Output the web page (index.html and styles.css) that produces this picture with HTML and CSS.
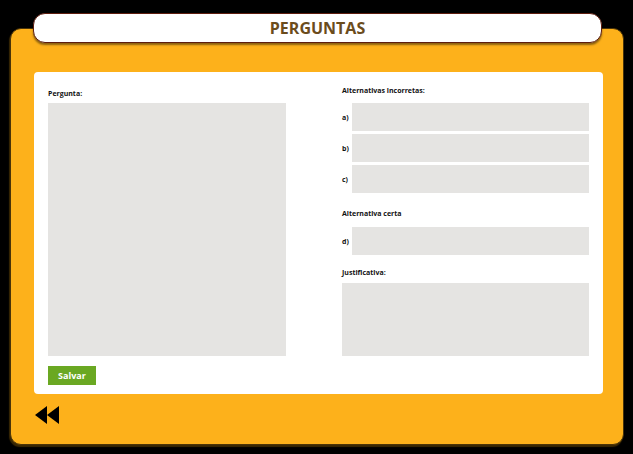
FILE: index.html
```html
<!DOCTYPE html>
<html lang="pt">
<head>
<meta charset="utf-8">
<title>Perguntas</title>
<link rel="stylesheet" href="styles.css">
</head>
<body>
<div class="frame">
  <header class="title-bar"><h1 class="title">PERGUNTAS</h1></header>
  <main class="panel">
    <form class="card">
      <div class="col-left">
        <label class="label label-left">Pergunta:</label>
        <div class="box question"></div>
      </div>
      <div class="col-right">
        <label class="label">Alternativas incorretas:</label>
        <div class="alts">
          <div class="alt"><span class="letter">a)</span><div class="box input"></div></div>
          <div class="alt"><span class="letter">b)</span><div class="box input"></div></div>
          <div class="alt"><span class="letter">c)</span><div class="box input"></div></div>
        </div>
        <label class="label label-certa">Alternativa certa</label>
        <div class="alt"><span class="letter">d)</span><div class="box input"></div></div>
        <label class="label label-just">Justificativa:</label>
        <div class="box justify"></div>
      </div>
      <div class="actions"><button type="button" class="btn">Salvar</button></div>
    </form>
    <div class="nav">
      <svg class="rewind" width="24" height="18" viewBox="0 0 24 18"><polygon points="12,0 0,9 12,18"/><polygon points="24,0 12,9 24,18"/></svg>
    </div>
  </main>
</div>
</body>
</html>
```
FILE: styles.css
```css
* { box-sizing: border-box; }
html, body { margin: 0; padding: 0; background: #000; }
body { font-family: "Open Sans", "Liberation Sans", sans-serif; width: 633px; height: 454px; overflow: hidden; }
.frame { padding: 13px 9px 0 10px; display: flex; flex-direction: column; }
.title-bar {
  position: relative; z-index: 2;
  margin: 0 22px 0 23px; height: 30px;
  background: #fff; border: 1.5px solid #5e1d0e; border-radius: 12px;
  box-shadow: 0 2px 2px rgba(0,0,0,.45);
  display: flex; align-items: center; justify-content: center;
}
.title { margin: 0; font-size: 16px; font-weight: 700; color: #6b4c1c; letter-spacing: 0; line-height: 1; }
.panel {
  margin-top: -15px; height: 417px;
  background: #fdb11b; border: 1px solid #4a3408; border-radius: 11px;
  box-shadow: -1px 2px 1px #3a2804;
  padding: 43px 20px 0 23px;
  display: flex; flex-direction: column;
}
.card {
  margin: 0; background: #fff; border-radius: 4px; height: 322px;
  padding: 0 14px 0 14px;
  display: grid; grid-template-columns: 238px 247px; column-gap: 56px;
  grid-template-rows: 284px auto;
}
.label { display: block; font-size: 7px; font-weight: 700; color: #111; line-height: 10px; }
.col-left { padding-top: 17px; display: flex; flex-direction: column; }
.label-left { margin-bottom: 4px; }
.box { background: #e5e4e2; }
.question { height: 253px; }
.col-right { padding-top: 14px; display: flex; flex-direction: column; }
.alts { margin-top: 7px; display: flex; flex-direction: column; gap: 3px; }
.alt { display: flex; align-items: center; }
.letter { width: 10px; font-size: 7px; font-weight: 700; color: #111; }
.input { flex: 1; height: 28px; }
.label-certa { margin-top: 16px; margin-bottom: 8px; }
.label-just { margin-top: 13px; margin-bottom: 5px; }
.justify { height: 73px; }
.actions { grid-column: 1 / 3; padding-top: 10px; display: flex; }
.btn {
  display: block; border: 0; margin: 0; padding: 0; width: 48px; height: 19px;
  background: #6aa822; color: #fff; font-family: inherit; font-size: 9px; font-weight: 700; line-height: 19px;
}
.nav { padding-top: 12px; padding-left: 1px; display: flex; }
.rewind { display: block; fill: #000; }
```
